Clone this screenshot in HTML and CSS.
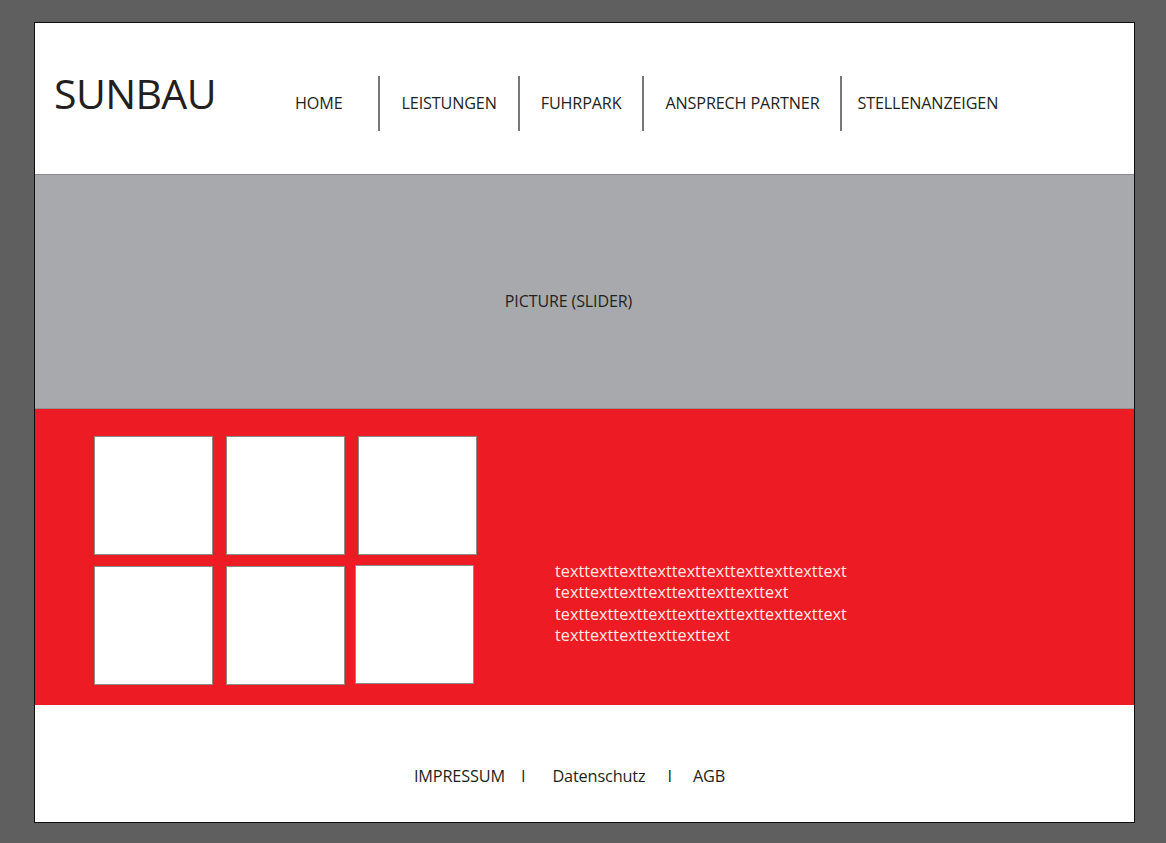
FILE: index.html
```html
<!DOCTYPE html>
<html lang="de">
<head>
<meta charset="utf-8">
<title>SUNBAU</title>
<link rel="stylesheet" href="styles.css">
</head>
<body>
<div class="artboard">
  <header class="header">
    <div class="logo">SUNBAU</div>
    <nav class="nav">
      <a class="nav-link nav-home" href="#">HOME</a>
      <span class="nav-sep"></span>
      <a class="nav-link" href="#">LEISTUNGEN</a>
      <span class="nav-sep"></span>
      <a class="nav-link" href="#">FUHRPARK</a>
      <span class="nav-sep"></span>
      <a class="nav-link" href="#">ANSPRECH PARTNER</a>
      <span class="nav-sep"></span>
      <a class="nav-link nav-last" href="#">STELLENANZEIGEN</a>
    </nav>
  </header>

  <section class="slider">
    <span class="slider-label">PICTURE (SLIDER)</span>
  </section>

  <section class="feature">
    <div class="tiles">
      <div class="tile"></div>
      <div class="tile"></div>
      <div class="tile"></div>
      <div class="tile"></div>
      <div class="tile"></div>
      <div class="tile tile-shift"></div>
    </div>
    <div class="feature-text">
      <p>texttexttexttexttexttexttexttexttexttext</p>
      <p>texttexttexttexttexttexttexttext</p>
      <p>texttexttexttexttexttexttexttexttexttext</p>
      <p>texttexttexttexttexttext</p>
    </div>
  </section>

  <footer class="footer">
    <a class="footer-link" href="#">IMPRESSUM</a>
    <span class="footer-sep sep-a">I</span>
    <a class="footer-link" href="#">Datenschutz</a>
    <span class="footer-sep sep-b">I</span>
    <a class="footer-link" href="#">AGB</a>
  </footer>
</div>
</body>
</html>
```

FILE: styles.css
```css
html, body {
  margin: 0;
  padding: 0;
}

body {
  background: #5f5f5f;
  font-family: "Open Sans", "Noto Sans", sans-serif;
  color: #231f20;
  padding: 22px 0 0 34px;
  min-height: 843px;
  box-sizing: border-box;
}

a {
  color: inherit;
  text-decoration: none;
}

.artboard {
  width: 1101px;
  height: 801px;
  box-sizing: border-box;
  border: 1px solid #0d0d0d;
  background: #ffffff;
  display: flex;
  flex-direction: column;
}

/* Header */
.header {
  height: 151px;
  box-sizing: border-box;
  display: flex;
  align-items: baseline;
  padding: 42px 0 0 19px;
}

.logo {
  font-size: 41px;
  letter-spacing: -0.6px;
  color: #231f20;
  width: 241px;
  flex: none;
}

.nav {
  display: flex;
  align-items: center;
  height: 55px;
}

.nav-link {
  font-size: 16.2px;
  letter-spacing: -0.15px;
  line-height: 22px;
  padding: 0 21px;
  white-space: nowrap;
}

.nav-home {
  padding-left: 0;
  padding-right: 36px;
}

.nav-last {
  padding-left: 15px;
}

.nav-sep {
  width: 2px;
  height: 55px;
  background: #75777a;
  flex: none;
}

/* Slider */
.slider {
  height: 235px;
  box-sizing: border-box;
  background: #a7a9ac;
  border-top: 1px solid #8a8b8e;
  border-bottom: 1px solid #8f8f92;
  display: flex;
  justify-content: center;
  align-items: flex-start;
  padding: 115px 32px 0 0;
}

.slider-label {
  font-size: 16px;
  line-height: 22px;
  letter-spacing: -0.1px;
  color: #231f20;
}

/* Red feature section */
.feature {
  height: 296px;
  box-sizing: border-box;
  background: #ed1c24;
  display: flex;
  align-items: flex-start;
  padding: 27px 0 0 59px;
}

.tiles {
  display: grid;
  grid-template-columns: repeat(3, 119px);
  grid-template-rows: repeat(2, 119px);
  column-gap: 13px;
  row-gap: 11px;
}

.tile {
  width: 119px;
  height: 119px;
  background: #ffffff;
  border: 1px solid #8f8a8a;
  box-sizing: border-box;
}

.tile-shift {
  margin: -1px 0 0 -3px;
}

.feature-text {
  margin: 125px 0 0 78px;
  color: #fdeae6;
  font-size: 16.2px;
  line-height: 21.4px;
  letter-spacing: 0.02px;
}

.feature-text p {
  margin: 0;
  white-space: nowrap;
}

/* Footer */
.footer {
  flex: 1;
  display: flex;
  justify-content: center;
  align-items: flex-start;
  padding: 60px 30px 0 0;
  font-size: 16.3px;
  line-height: 22px;
  letter-spacing: -0.15px;
}

.footer-sep {
  display: inline-block;
}

.sep-a {
  margin: 0 27px 0 16px;
}

.sep-b {
  margin: 0 21px 0 22px;
}
```
